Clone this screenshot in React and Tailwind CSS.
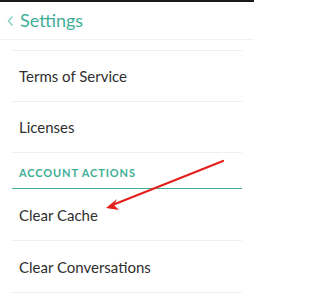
import React from 'react';

const Row = ({ label, tall }) => (
  <div className={`${tall ? 'h-[52px]' : 'h-[51px]'} pt-[1px] flex items-center pl-[7px] border-b border-[#efefef] text-[15px] text-[#2f2f2f]`}>
    {label}
  </div>
);

export default function App() {
  return (
    <div className="relative w-[254px] h-[300px] bg-white overflow-hidden" style={{ fontFamily: 'Lato, "Open Sans", sans-serif' }}>
      <div className="h-[2px] bg-[#1a1a1a]" />
      {/* Header */}
      <div className="h-[38px] flex items-center border-b border-[#f2f2f2] pl-[7px]">
        <svg width="6" height="10" viewBox="0 0 6 10" className="mr-[7px]">
          <path d="M5 1 L1.5 5 L5 9" fill="none" stroke="#8fd3c3" strokeWidth="1.6" strokeLinecap="round" />
        </svg>
        <span className="text-[18px] text-[#3fae96] leading-none pb-[1px]">Settings</span>
      </div>

      <div className="mx-[12px] mt-[10px] border-t border-[#efefef]">
        <Row label="Terms of Service" />
        <Row label="Licenses" />
        <div className="h-[36px] flex items-end pl-[7px] pb-[10px] border-b-[1.5px] border-[#3fae96]">
          <span className="text-[11px] font-bold tracking-[0.08em] text-[#3fae96] leading-none">ACCOUNT ACTIONS</span>
        </div>
        <Row label="Clear Cache" tall />
        <Row label="Clear Conversations" tall />
      </div>

      {/* annotation arrow */}
      <svg className="absolute left-0 top-0 pointer-events-none" width="254" height="300">
        <line x1="223" y1="161" x2="110" y2="206" stroke="#e3201b" strokeWidth="2.2" strokeLinecap="round" />
        <path d="M106 208 L117 199 L114 205 L119 210 Z" fill="#e3201b" />
      </svg>
    </div>
  );
}
